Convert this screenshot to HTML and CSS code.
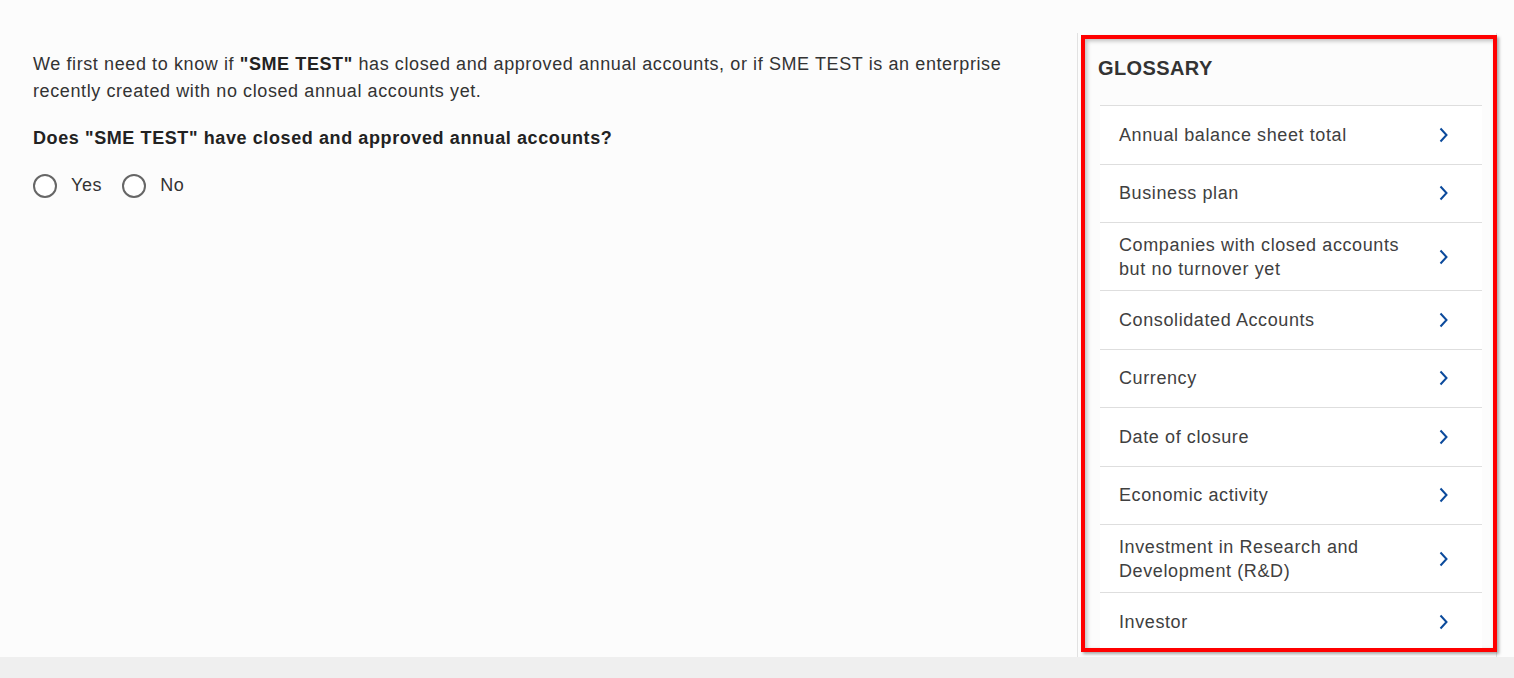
FILE: index.html
```html
<!DOCTYPE html>
<html lang="en">
<head>
    <meta charset="UTF-8">
    <meta name="viewport" content="width=device-width, initial-scale=1.0">
    <title>SME Test - Annual accounts</title>
    <link rel="stylesheet" href="styles.css">
</head>
<body>

<div class="page">
    <main class="content">
        <p class="intro">We first need to know if <b>"SME TEST"</b> has closed and approved annual accounts, or if SME TEST is an enterprise recently created with no closed annual accounts yet.</p>
        <p class="question">Does "SME TEST" have closed and approved annual accounts?</p>
        <div class="choices">
            <label class="choice"><span class="radio"></span>Yes</label>
            <label class="choice"><span class="radio"></span>No</label>
        </div>
    </main>

    <aside class="sidebar">
        <div class="glossary">
            <h2>GLOSSARY</h2>
            <ul class="terms">
                <li><span>Annual balance sheet total</span><svg class="chev" viewBox="0 0 10 16"><path d="M1.5 1.5l6 6.5-6 6.5"/></svg></li>
                <li><span>Business plan</span><svg class="chev" viewBox="0 0 10 16"><path d="M1.5 1.5l6 6.5-6 6.5"/></svg></li>
                <li><span>Companies with closed accounts but no turnover yet</span><svg class="chev" viewBox="0 0 10 16"><path d="M1.5 1.5l6 6.5-6 6.5"/></svg></li>
                <li><span>Consolidated Accounts</span><svg class="chev" viewBox="0 0 10 16"><path d="M1.5 1.5l6 6.5-6 6.5"/></svg></li>
                <li><span>Currency</span><svg class="chev" viewBox="0 0 10 16"><path d="M1.5 1.5l6 6.5-6 6.5"/></svg></li>
                <li><span>Date of closure</span><svg class="chev" viewBox="0 0 10 16"><path d="M1.5 1.5l6 6.5-6 6.5"/></svg></li>
                <li><span>Economic activity</span><svg class="chev" viewBox="0 0 10 16"><path d="M1.5 1.5l6 6.5-6 6.5"/></svg></li>
                <li><span>Investment in Research and Development (R&amp;D)</span><svg class="chev" viewBox="0 0 10 16"><path d="M1.5 1.5l6 6.5-6 6.5"/></svg></li>
                <li><span>Investor</span><svg class="chev" viewBox="0 0 10 16"><path d="M1.5 1.5l6 6.5-6 6.5"/></svg></li>
            </ul>
        </div>
    </aside>
</div>

<footer class="footer"></footer>

</body>
</html>
```

FILE: styles.css
```css
html, body { margin: 0; padding: 0; }
body { font-family: "Liberation Sans", Arial, sans-serif; color: #333; background: #efefef; overflow: hidden; letter-spacing: 0.6px; }

.page { display: flex; height: 657px; background: #fcfcfc; }

.content { width: 1077px; box-sizing: border-box; padding: 51px 33px 0 33px; }
.intro { margin: 0; font-size: 18px; line-height: 27px; }
.intro b { color: #222; }
.question { margin: 20px 0 0; font-size: 18px; line-height: 27px; font-weight: bold; color: #222; }
.choices { display: flex; gap: 20px; margin-top: 20px; }
.choice { display: flex; align-items: center; gap: 14px; font-size: 18px; line-height: 27px; color: #333; }
.radio { width: 20px; height: 20px; border: 2px solid #666; border-radius: 50%; background: #fff; }

.sidebar { margin-top: 33px; width: 420px; border-left: 1px solid #e2e2e2; border-right: 1px solid #e2e2e2; box-sizing: border-box; height: 624px; }
.glossary { margin: 2px 0 0 3px; width: 416px; height: 617px; box-sizing: border-box; border: 4px solid #ff0000; box-shadow: 2px 2px 3px rgba(0, 0, 0, 0.35), inset 2px 2px 4px rgba(0, 0, 0, 0.25); padding: 0 11px 0 15px; overflow: hidden; }
.glossary h2 { margin: 0 0 0 -2px; padding-top: 17px; height: 49px; font-size: 20px; line-height: 24px; font-weight: bold; color: #333; letter-spacing: 0.4px; }

.terms { list-style: none; margin: 0; padding: 0; background: #fff; }
.terms li { display: flex; align-items: center; justify-content: space-between; min-height: 58.5px; box-sizing: border-box; padding: 9.5px 33px 9.5px 19px; border-top: 1px solid #dedede; font-size: 18px; line-height: 24px; color: #404040; }
.terms li span { max-width: 300px; }
.chev { width: 10px; height: 16px; flex: none; fill: none; stroke: #0b4a9c; stroke-width: 2; }

.footer { height: 21px; background: #efefef; }
```
